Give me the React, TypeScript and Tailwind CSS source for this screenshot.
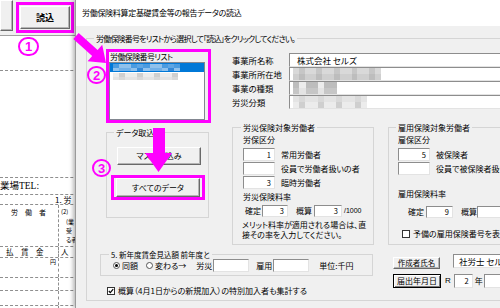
import clsx from "clsx";
import type { ReactNode } from "react";

const GRAYS = [
  "bg-[#cfcfcf]",
  "bg-[#e4e4e4]",
  "bg-[#bdbdbd]",
  "bg-[#d9d9d9]",
  "bg-[#ececec]",
  "bg-[#c6c6c6]",
];
const BLUES = [
  "bg-[#4a9be0]",
  "bg-[#70b0e8]",
  "bg-[#3389d8]",
  "bg-[#8fc1ec]",
  "bg-[#5ea6e4]",
];

const dash = "border-b border-dashed border-[#8f8f8f]";

function Blur({
  className,
  rows,
  cols,
  palette,
  seed = 0,
}: {
  className: string;
  rows: number;
  cols: number;
  palette: string[];
  seed?: number;
}) {
  return (
    <div className={clsx("flex flex-col", className)}>
      {Array.from({ length: rows }).map((_, r) => (
        <div key={r} className="flex flex-1">
          {Array.from({ length: cols }).map((_, c) => (
            <div
              key={c}
              className={clsx("flex-1", palette[(c * 7 + r * 3 + seed * 5 + c * c) % palette.length])}
            />
          ))}
        </div>
      ))}
    </div>
  );
}

function Group({
  title,
  legend,
  className,
  children,
}: {
  title: string;
  legend: string;
  className?: string;
  children?: ReactNode;
}) {
  return (
    <div className={clsx("relative border border-[#d5d5d5]", className)}>
      <span
        className={clsx(
          "absolute -top-[6px] bg-[#f0f0f0] px-[2px] leading-[11px] whitespace-nowrap",
          legend
        )}
      >
        {title}
      </span>
      {children}
    </div>
  );
}

function Field({
  className,
  children,
  left,
}: {
  className?: string;
  children?: ReactNode;
  left?: boolean;
}) {
  return (
    <div
      className={clsx(
        "bg-white border border-t-[#8d8d8d] border-l-[#8d8d8d] border-r-[#e3e3e3] border-b-[#e3e3e3] flex items-center leading-none whitespace-nowrap overflow-hidden",
        left ? "justify-start" : "justify-end pr-[3px] text-[7.5px]",
        className
      )}
    >
      {children}
    </div>
  );
}

function Button({
  className,
  children,
  strong,
}: {
  className?: string;
  children?: ReactNode;
  strong?: boolean;
}) {
  return (
    <div
      className={clsx(
        "bg-[#f0f0f0] flex items-center justify-center leading-none whitespace-nowrap shrink-0",
        strong
          ? "border border-black shadow-[inset_1px_1px_0_#fff,inset_-1px_-1px_0_#7a7a7a]"
          : "border border-t-white border-l-white border-r-[#696969] border-b-[#696969] shadow-[inset_-1px_-1px_0_#b4b4b4]",
        className
      )}
    >
      {children}
    </div>
  );
}

function Check({ checked, className }: { checked?: boolean; className?: string }) {
  return (
    <div className={clsx("w-[8px] h-[8px] bg-white border border-[#333] shrink-0", className)}>
      {checked && (
        <svg width="6" height="6" viewBox="0 0 6 6">
          <polyline points="0.8,3 2.3,4.6 5.2,1.2" fill="none" stroke="#000" strokeWidth="1.2" />
        </svg>
      )}
    </div>
  );
}

function Radio({ checked, className }: { checked?: boolean; className?: string }) {
  return (
    <div
      className={clsx(
        "w-[7px] h-[7px] rounded-full bg-white border border-[#555] flex items-center justify-center shrink-0",
        className
      )}
    >
      {checked && <div className="w-[3px] h-[3px] rounded-full bg-black" />}
    </div>
  );
}

function Circled({ n, className }: { n: string; className: string }) {
  return (
    <div
      className={clsx(
        "absolute rounded-full border-2 border-[#ff00ff] text-[#ff00ff] font-bold flex items-center justify-center text-[13px] leading-none font-['Liberation_Sans',sans-serif]",
        className
      )}
    >
      {n}
    </div>
  );
}

function DocRow({ h, left, right }: { h: string; left?: ReactNode; right?: ReactNode }) {
  return (
    <div className={clsx("flex", h, dash)}>
      <div className="w-[59px] border-r border-dashed border-[#8f8f8f]">{left}</div>
      <div className="flex-1">{right}</div>
    </div>
  );
}

function Document() {
  return (
    <div className="flex flex-col w-full">
      <div className="h-[36px] bg-[#f0f0f0] border-b border-[#a0a0a0] flex items-start">
        <Button className="w-[13px] h-[31px]" />
        <div className="ml-[3px] mt-[2px] w-[58px] h-[31px] border-[3px] border-[#ff00ff] p-[1px] flex">
          <Button className="flex-1 text-[9px] font-bold">読込</Button>
        </div>
      </div>
      <div className={clsx("h-[35px]", dash)} />
      <div className={clsx("h-[107px]", dash)} />
      <div
        className={clsx(
          "h-[17px] flex items-center text-[9.5px] font-['Liberation_Serif','Noto_Sans_CJK_JP',serif]",
          dash
        )}
      >
        業場TEL:
      </div>
      <div className={clsx("h-[10px] flex items-center pl-[55px] text-[8px]", dash)}>1. 労</div>
      <DocRow
        h="h-[42px]"
        left={<div className="pl-[11px] pt-[3px] text-[7px] leading-[8px]">労　働　者</div>}
        right={
          <div className="pl-[2px] pt-[3px] text-[6px] leading-[8px]">
            (2)
            <div className="pl-[5px] pt-[2px] flex flex-col gap-[1px]">
              <span>(業</span>
              <span>受</span>
              <span>る者</span>
            </div>
          </div>
        }
      />
      <DocRow
        h="h-[11px]"
        left={<div className="pl-[6px] text-[7.5px] leading-[10px]">払　賃　金</div>}
        right={<div className="pl-[2px] text-[7.5px] leading-[10px]">人</div>}
      />
      <DocRow h="h-[20px]" left={<div className="text-right pr-[2px] text-[6px] leading-[7px]">円</div>} />
      <DocRow h="h-[13px]" />
      <DocRow h="h-[15px]" />
      <DocRow h="h-[10px]" />
    </div>
  );
}

function LeftColumn() {
  return (
    <div className="ml-[6px] w-[105px] shrink-0 flex flex-col">
      <div className="h-[74px] border-[3px] border-[#ff00ff] pr-[3px] flex flex-col">
        <div className="h-[10px] pl-[1px] leading-[10px] tracking-[-0.6px]">労働保険番号リスト</div>
        <div className="flex-1 bg-white border border-[#828790] flex flex-col">
          <div className="h-[9px] bg-[#0078d7] flex items-center pl-[3px]">
            <Blur className="w-[67px] h-[7px]" rows={2} cols={11} palette={BLUES} seed={1} />
          </div>
          <div className="h-[9px] flex items-center pl-[3px]">
            <Blur className="w-[65px] h-[7px]" rows={2} cols={11} palette={GRAYS} seed={2} />
          </div>
        </div>
      </div>
      <Group title="データ取込" legend="left-[7px]" className="mt-[9px] w-[103px] h-[86px] pt-[14px] pl-[10px]">
        <Button className="w-[84px] h-[18px]">マスタ読込み</Button>
        <div className="mt-[10px] -ml-[6px] w-[94px] h-[25px] border-[3px] border-[#ff00ff] px-[2px] flex">
          <Button className="flex-1">すべてのデータ</Button>
        </div>
      </Group>
    </div>
  );
}

function RightColumn() {
  const info: [string, ReactNode][] = [
    ["事業所名称", <span className="pl-[7px] text-[8.5px]">株式会社 セルズ</span>],
    ["事業所所在地", <Blur className="ml-[3px] w-[88px] h-[12px]" rows={2} cols={15} palette={GRAYS} seed={3} />],
    ["事業の種類", <Blur className="ml-[3px] w-[44px] h-[12px]" rows={2} cols={7} palette={GRAYS} seed={4} />],
    ["労災分類", <Blur className="ml-[3px] w-[74px] h-[12px]" rows={2} cols={12} palette={GRAYS} seed={5} />],
  ];
  return (
    <div className="ml-[21px] w-[300px] shrink-0 mt-[4px]">
      {info.map(([label, content]) => (
        <div key={label} className="flex h-[14px]">
          <div className="w-[57px] leading-[14px] shrink-0 text-[8.3px]">{label}</div>
          <Field left className="flex-1 h-full">
            {content}
          </Field>
        </div>
      ))}
      <div className="mt-[18px] flex">
        <Group title="労災保険対象労働者" legend="left-[8px]" className="w-[142px] h-[118px] pl-[10px] pt-[7px] shrink-0">
          <div className="h-[10px] leading-[10px]">労保区分</div>
          <div className="mt-[3px] flex flex-col gap-[1px]">
            {[
              ["1", "常用労働者"],
              ["", "役員で労働者扱いの者"],
              ["3", "臨時労働者"],
            ].map(([v, l]) => (
              <div key={l} className="flex items-center h-[13px]">
                <Field className="w-[32px] h-[13px]">{v}</Field>
                <span className="ml-[6px] whitespace-nowrap">{l}</span>
              </div>
            ))}
          </div>
          <div className="mt-[3px] h-[10px] leading-[10px]">労災保険料率</div>
          <div className="mt-[3px] h-[12px] flex items-center">
            <span className="ml-[2px]">確定</span>
            <Field className="ml-[1px] w-[26px] h-[12px]">3</Field>
            <span className="ml-[8px]">概算</span>
            <Field className="ml-[2px] w-[28px] h-[12px]">3</Field>
            <span className="ml-[2px] text-[7px] font-['Liberation_Sans',sans-serif]">/1000</span>
          </div>
          <div className="mt-[3px] -ml-[1px] leading-[9.5px] whitespace-nowrap">
            メリット料率が適用される場合は、直
            <br />
            接その率を入力してください。
          </div>
        </Group>
        <Group title="雇用保険対象労働者" legend="left-[7px]" className="ml-[14px] w-[150px] h-[118px] pl-[9px] pt-[7px] shrink-0">
          <div className="h-[10px] leading-[10px]">雇保区分</div>
          <div className="mt-[3px] flex flex-col gap-[1px]">
            {[
              ["5", "被保険者"],
              ["", "役員で被保険者扱いの者"],
            ].map(([v, l]) => (
              <div key={l} className="flex items-center h-[13px]">
                <Field className="w-[32px] h-[13px]">{v}</Field>
                <span className="ml-[6px] whitespace-nowrap">{l}</span>
              </div>
            ))}
          </div>
          <div className="mt-[14px] h-[10px] leading-[10px]">雇用保険料率</div>
          <div className="mt-[7px] h-[12px] flex items-center">
            <span className="ml-[10px]">確定</span>
            <Field className="ml-[2px] w-[27px] h-[12px]">9</Field>
            <span className="ml-[8px]">概算</span>
            <Field className="w-[40px] h-[12px]" />
          </div>
          <div className="mt-[11px] h-[9px] flex items-center">
            <Check className="ml-[4px]" />
            <span className="ml-[3px] whitespace-nowrap">予備の雇用保険番号を表示</span>
          </div>
        </Group>
      </div>
    </div>
  );
}

function BottomSection() {
  return (
    <div className="mt-[9px] flex items-start">
      <div className="w-[273px] shrink-0">
        <Group
          title="5. 新年度賃金見込額 前年度と"
          legend="left-[8px] text-[7.5px]"
          className="h-[22px] flex items-center pt-[1px] whitespace-nowrap"
        >
          <Radio checked className="ml-[12px]" />
          <span className="ml-[2px]">同額</span>
          <Radio className="ml-[8px]" />
          <span className="ml-[2px]">変わる→</span>
          <span className="ml-[10px]">労災</span>
          <Field className="ml-[1px] w-[36px] h-[13px]" />
          <span className="ml-[7px]">雇用</span>
          <Field className="ml-[1px] w-[36px] h-[13px]" />
          <span className="ml-[10px]">単位:千円</span>
        </Group>
        <div className="mt-[10px] h-[9px] flex items-center whitespace-nowrap">
          <Check checked className="ml-[7px]" />
          <span className="ml-[3px]">概算（4月1日からの新規加入）の特別加入者も集計する</span>
        </div>
      </div>
      <div className="ml-[20px] shrink-0">
        <div className="flex items-start">
          <Button className="mt-[3px] w-[47px] h-[12px] text-[7.5px]">作成者氏名</Button>
          <Field left className="ml-[13px] w-[70px] h-[14px] text-[8.5px]">
            <span className="pl-[5px]">社労士 セルズ</span>
          </Field>
        </div>
        <div className="mt-[5px] flex items-center">
          <Button strong className="w-[48px] h-[14px]">
            届出年月日
          </Button>
          <span className="ml-[4px] font-['Liberation_Sans',sans-serif]">R</span>
          <Field className="ml-[3px] w-[19px] h-[14px]">2</Field>
          <span className="ml-[2px]">年</span>
          <Field className="ml-[1px] w-[30px] h-[14px]">4</Field>
        </div>
      </div>
    </div>
  );
}

function Dialog() {
  return (
    <div className="absolute left-[75px] top-0 w-[445px] h-[308px] flex flex-col bg-[#f0f0f0] border-l border-[#9a9a9a] shadow-[-2px_0_4px_rgba(0,0,0,0.28)]">
      <div className="h-[26px] shrink-0 bg-white flex items-center pl-[6px] whitespace-nowrap tracking-[-0.3px]">
        労働保険料算定基礎賃金等の報告データの読込
      </div>
      <div className="pl-[10px] pt-[12px]">
        <Group
          title="労働保険番号をリストから選択して「読込」をクリックしてください。"
          legend="left-[7px] tracking-[-0.8px]"
          className="w-[470px] h-[263px] pl-[13px] pt-[10px]"
        >
          <div className="flex items-start">
            <LeftColumn />
            <RightColumn />
          </div>
          <BottomSection />
        </Group>
      </div>
    </div>
  );
}

export default function App() {
  return (
    <div className="relative w-[500px] h-[308px] overflow-hidden bg-white text-black font-['Noto_Sans_CJK_JP',sans-serif] [font-feature-settings:'palt'] text-[8px] leading-[10px]">
      <Document />
      <Dialog />

      {/* annotations */}
      <svg className="absolute left-0 top-0" width="500" height="308" viewBox="0 0 500 308">
        <polygon points="78.7,33 97.6,50 102.2,44.8 106,63 87.6,61.2 92.2,56 73.3,39" fill="#ff00ff" />
        <polygon points="153,128 165,128 165,153 172,153 158.5,172 145,153 153,153" fill="#ff00ff" />
      </svg>
      <Circled n="1" className="left-[18px] top-[37px] w-[21px] h-[19px]" />
      <Circled n="2" className="left-[87px] top-[66px] w-[19px] h-[18px]" />
      <Circled n="3" className="left-[92px] top-[159px] w-[19px] h-[18px]" />
    </div>
  );
}
